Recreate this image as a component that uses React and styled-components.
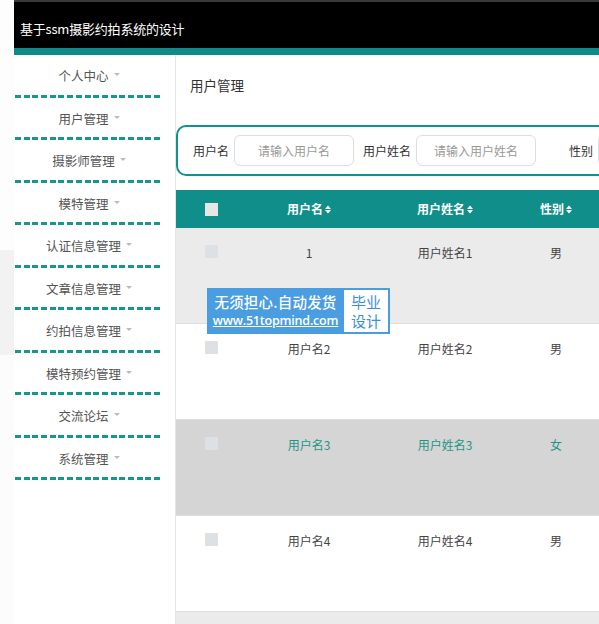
import React from "react";
import styled, { createGlobalStyle } from "styled-components";

const Global = createGlobalStyle`
  html, body { margin: 0; padding: 0; background: #fff; }
  body { font-family: "Noto Sans CJK SC", "Noto Sans", sans-serif; width: 599px; height: 624px; overflow: hidden; }
  * { box-sizing: border-box; }
`;

const Page = styled.div`
  display: flex;
  width: 599px;
  height: 624px;
  overflow: hidden;
`;

const Gutter = styled.div`
  width: 14px;
  flex: none;
  background: linear-gradient(#fdfdfd, #fdfdfd) 0 0 / 100% 250px no-repeat,
    linear-gradient(#f2f2f2, #f2f2f2) 0 250px / 100% 105px no-repeat,
    #fcfcfc;
`;

const Shell = styled.div`
  flex: 1;
  display: flex;
  flex-direction: column;
  min-width: 0;
`;

const Header = styled.header`
  height: 48px;
  background: #000;
  border-top: 2px solid #3a3a3a;
  display: flex;
  align-items: center;
  padding-left: 6px;
  padding-top: 6px;
  color: #fff;
  font-size: 13px;
  letter-spacing: -0.2px;
`;

const TealBar = styled.div`
  height: 7px;
  background: #0f8a88;
`;

const Body = styled.div`
  flex: 1;
  display: flex;
  min-height: 0;
`;

const Sidebar = styled.nav`
  width: 162px;
  flex: none;
  display: flex;
  flex-direction: column;
  padding-left: 1px;
  border-right: 1px solid #e4e4e4;
`;

const MenuItem = styled.div`
  width: 148px;
  display: flex;
  flex-direction: column;
`;

const MenuLabel = styled.div`
  height: 39.5px;
  padding-top: 2px;
  display: flex;
  align-items: center;
  justify-content: center;
  gap: 5px;
  color: #555;
  font-size: 12.5px;
`;

const Caret = styled.span`
  width: 0;
  height: 0;
  border-left: 3px solid transparent;
  border-right: 3px solid transparent;
  border-top: 3px solid #bbb;
  margin-top: -2px;
`;

const Dash = styled.div`
  height: 3px;
  background: repeating-linear-gradient(90deg, #17958f 0 6px, transparent 6px 8.7px);
`;

const Main = styled.main`
  flex: 1;
  min-width: 0;
  overflow: hidden;
  position: relative;
`;

const Title = styled.h2`
  margin: 0;
  height: 70px;
  padding: 20px 0 0 14px;
  font-size: 13.5px;
  font-weight: normal;
  color: #333;
`;

const SearchBox = styled.div`
  width: 560px;
  height: 51px;
  border: 2px solid #12918d;
  border-radius: 10px;
  display: flex;
  align-items: center;
  padding-left: 15px;
  gap: 5px;
`;

const FieldLabel = styled.span`
  font-size: 12px;
  color: #333;
  margin-left: ${(p) => p.$offset || 0}px;
  white-space: nowrap;
`;

const Input = styled.div`
  width: 120px;
  height: 31px;
  border: 1px solid #e0dbe6;
  border-radius: 6px;
  display: flex;
  align-items: center;
  justify-content: center;
  color: #999;
  font-size: 12px;
  flex: none;
`;

const Table = styled.div`
  margin-top: 14px;
  width: 600px;
`;

const Row = styled.div`
  display: flex;
  height: ${(p) => (p.$head ? 38 : 96)}px;
  align-items: ${(p) => (p.$head ? "center" : "flex-start")};
  background: ${(p) => p.$bg};
  color: ${(p) => p.$color || "#444"};
  border-bottom: ${(p) => (p.$head ? "none" : "1px solid #dedede")};
  font-size: 12px;
`;

const Cell = styled.div`
  width: ${(p) => p.$w}px;
  flex: none;
  display: flex;
  justify-content: center;
  align-items: center;
  gap: 2px;
  padding-top: ${(p) => (p.$head ? 0 : 17)}px;
  line-height: 16px;
  font-weight: ${(p) => (p.$head ? "bold" : "normal")};
  color: ${(p) => (p.$head ? "#fff" : "inherit")};
  white-space: nowrap;
`;

const Check = styled.span`
  width: 13px;
  height: 13px;
  background: ${(p) => (p.$head ? "#e6e6e6" : "#dde0e4")};
  display: inline-block;
  margin-left: ${(p) => (p.$head ? 1 : 0)}px;
`;

const Watermark = styled.div`
  position: absolute;
  left: 31px;
  top: 233px;
  width: 183px;
  height: 46px;
  background: #4a9de0;
  display: flex;
  align-items: center;
  padding: 2px 2px 2px 4px;
  gap: 4px;
`;

const WmText = styled.div`
  width: 129px;
  flex: none;
  display: flex;
  flex-direction: column;
  align-items: center;
  color: #fff;
  line-height: 19px;
`;

const WmMain = styled.span`
  font-size: 14.5px;
  font-weight: 500;
  letter-spacing: 0.2px;
  white-space: nowrap;
`;

const WmUrl = styled.span`
  font-size: 12.5px;
  font-family: "Open Sans", "Noto Sans", sans-serif;
  font-weight: 600;
  text-decoration: underline;
  white-space: nowrap;
  letter-spacing: -0.2px;
`;

const WmBadge = styled.div`
  background: #fff;
  color: #3d8fd6;
  font-size: 15px;
  line-height: 19px;
  width: 44px;
  height: 42px;
  flex: none;
  display: flex;
  flex-direction: column;
  align-items: center;
  justify-content: center;
`;

const Sort = () => (
  <svg width="6" height="9" viewBox="0 0 6 9">
    <path d="M0 4 L3 0.5 L6 4 Z M0 5 L3 8.5 L6 5 Z" fill="#fff" />
  </svg>
);

const menus = ["个人中心", "用户管理", "摄影师管理", "模特管理", "认证信息管理", "文章信息管理", "约拍信息管理", "模特预约管理", "交流论坛", "系统管理"];

const cols = [70, 126, 146, 76, 200];

const rows = [
  { bg: "#ebebeb", c: ["1", "用户姓名1", "男"] },
  { bg: "#fff", c: ["用户名2", "用户姓名2", "男"] },
  { bg: "#d5d5d5", color: "#1f9488", c: ["用户名3", "用户姓名3", "女"] },
  { bg: "#fff", c: ["用户名4", "用户姓名4", "男"] },
  { bg: "#ebebeb", c: ["", "", ""] },
];

export default function App() {
  return (
    <>
      <Global />
      <Page>
        <Gutter />
        <Shell>
          <Header>基于ssm摄影约拍系统的设计</Header>
          <TealBar />
          <Body>
            <Sidebar>
              {menus.map((m) => (
                <MenuItem key={m}>
                  <MenuLabel>
                    {m}
                    <Caret />
                  </MenuLabel>
                  <Dash />
                </MenuItem>
              ))}
            </Sidebar>
            <Main>
              <Title>用户管理</Title>
              <SearchBox>
                <FieldLabel>用户名</FieldLabel>
                <Input>请输入用户名</Input>
                <FieldLabel $offset={4}>用户姓名</FieldLabel>
                <Input>请输入用户姓名</Input>
                <FieldLabel $offset={28}>性别</FieldLabel>
                <Input />
              </SearchBox>
              <Table>
                <Row $head $bg="#0f8e8a">
                  <Cell $head $w={cols[0]}>
                    <Check $head />
                  </Cell>
                  <Cell $head $w={cols[1]}>用户名<Sort /></Cell>
                  <Cell $head $w={cols[2]}>用户姓名<Sort /></Cell>
                  <Cell $head $w={cols[3]}>性别<Sort /></Cell>
                  <Cell $head $w={cols[4]} />
                </Row>
                {rows.map((r, i) => (
                  <Row key={i} $bg={r.bg} $color={r.color}>
                    <Cell $w={cols[0]}>{i < 4 && <Check />}</Cell>
                    <Cell $w={cols[1]}>{r.c[0]}</Cell>
                    <Cell $w={cols[2]}>{r.c[1]}</Cell>
                    <Cell $w={cols[3]}>{r.c[2]}</Cell>
                    <Cell $w={cols[4]} />
                  </Row>
                ))}
              </Table>
              <Watermark>
                <WmText>
                  <WmMain>无须担心.自动发货</WmMain>
                  <WmUrl>www.51topmind.com</WmUrl>
                </WmText>
                <WmBadge>
                  <span>毕业</span>
                  <span>设计</span>
                </WmBadge>
              </Watermark>
            </Main>
          </Body>
        </Shell>
      </Page>
    </>
  );
}
